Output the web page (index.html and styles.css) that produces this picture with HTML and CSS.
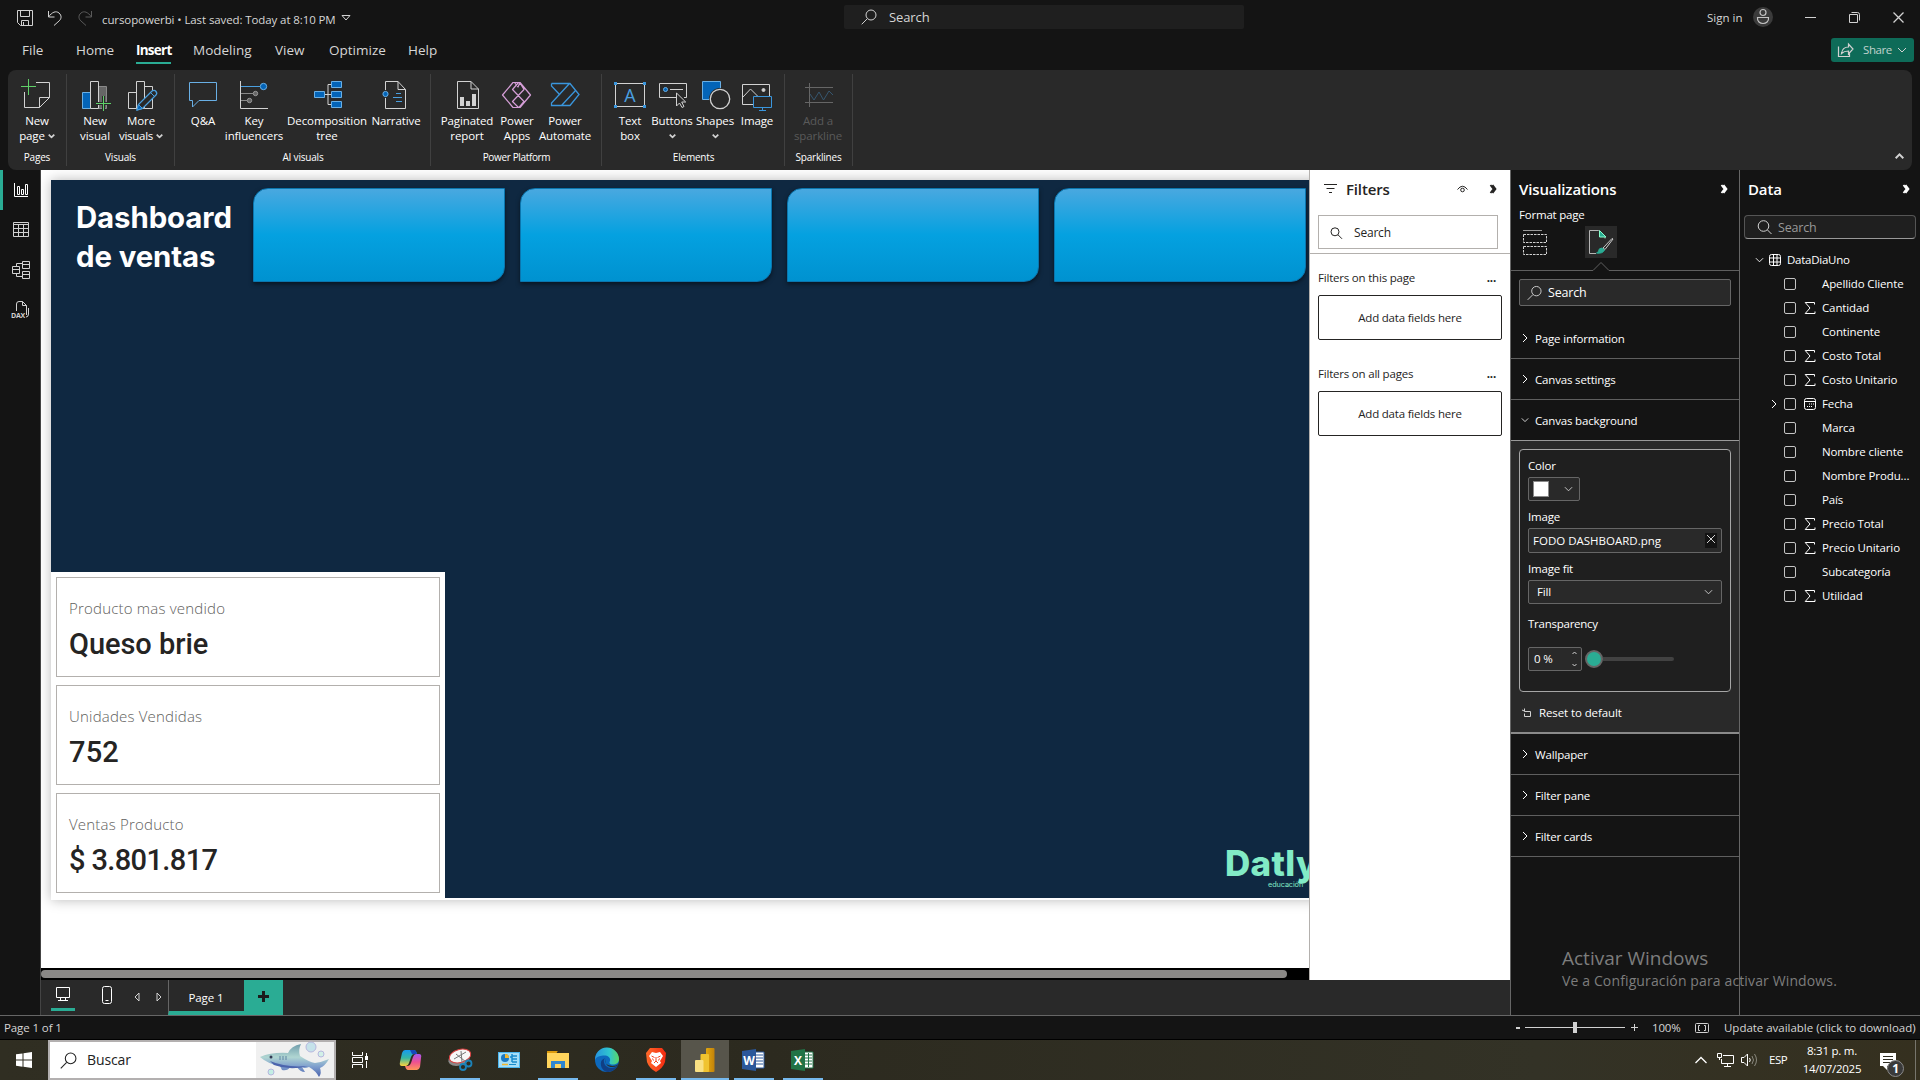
FILE: index.html
```html
<!DOCTYPE html>
<html lang="en">
<head>
<meta charset="utf-8">
<title>cursopowerbi</title>
<link rel="stylesheet" href="styles.css">
</head>
<body>
<svg class="defs" aria-hidden="true">
  <symbol id="chev-r" viewBox="0 0 8 10"><path d="M2 1l4 4-4 4"/></symbol>
  <symbol id="chev-d" viewBox="0 0 10 8"><path d="M1 2l4 4 4-4"/></symbol>
  <symbol id="collapse" viewBox="0 0 8 10"><path d="M1.500 1l3 4-3 4M3.500 1l3 4-3 4" stroke-width="1.800"/></symbol>
  <symbol id="lens" viewBox="0 0 16 16"><circle cx="10" cy="6" r="5"/><path d="M6.3 9.7L.7 15.3"/></symbol>
  <symbol id="sigma" viewBox="0 0 12 12"><path d="M10.5 2.5v-2H1.2L6 6l-4.800 5.500h9.800v-2"/></symbol>
</svg>

<header class="titlebar">
  <svg class="i save" width="16" height="16"><path d="M.5.5h15v15h-12l-3-3zM3.500 .5v6h9v-6M4.500 15.500v-5h7v5M6.500 15v-3"/></svg>
  <svg class="i undo" width="16" height="16"><path d="M1.500 1v6h6M1.500 7C5 2 9 .5 12 3s2.500 6 0 8l-5 4.500"/></svg>
  <svg class="i redo" width="16" height="16"><path d="M14.500 1v6h-6M14.500 7C11 2 7 .5 4 3s-2.500 6 0 8l5 4.500"/></svg>
  <span class="doc">cursopowerbi • Last saved: Today at 8:10 PM</span>
  <svg class="i tri" width="10" height="6"><path d="M1 .5h8L5 5z"/></svg>
  <div class="top-search"><svg class="i" width="16" height="16"><use href="#lens"/></svg><span>Search</span></div>
  <span class="signin">Sign in</span>
  <svg class="avatar" width="20" height="20"><circle cx="10" cy="10" r="10" fill="#3b3b3b"/><g fill="none" stroke="#c4c4c4" stroke-width="1.200"><circle cx="10" cy="5.500" r="3"/><path d="M4.500 10.500h11c.6 4-2.500 6-5.500 6s-6-2-5.500-6z"/></g></svg>
  <svg class="i win min" width="11" height="11"><path d="M0 5.500h11"/></svg>
  <svg class="i win max" width="11" height="11"><path d="M.5 2.500h8v8h-8zM2.500 .5h6q2 0 2 2v6"/></svg>
  <svg class="i win close" width="11" height="11"><path d="M.5.5l10 10M10.500 .5l-10 10" stroke-width="1.300"/></svg>
</header>

<nav class="tabs">
  <span class="tab file">File</span><span class="tab home">Home</span><span class="tab insert"><b>Insert</b></span><span class="tab modeling">Modeling</span><span class="tab view">View</span><span class="tab optimize">Optimize</span><span class="tab">Help</span>
  <button class="share"><svg class="i" width="16" height="14"><path d="M.5 3.500v10h11v-3M10.500 1v3C6 4 4 6.500 3.500 10.500 5.500 8.500 7 8 10.500 8v3L15 6z" stroke-width="1.200"/></svg><span>Share</span><svg class="i" width="10" height="8"><use href="#chev-d"/></svg></button>
</nav>

<section class="ribbon">
  <div class="group g-pages">
    <div class="cmds"><div class="cmd w58"><svg class="i" width="32" height="34"><path d="M15 4.500h13.500v15l-10 10h-15V14M18.500 29.500v-10h10"/><path d="M7.500 1v16M0 8.500h15" stroke="#5fd068"/></svg><span>New</span><span>page <svg class="i bold" width="7" height="6" viewBox="0 0 10 8"><use href="#chev-d"/></svg></span></div></div>
    <div class="gname">Pages</div>
  </div>
  <div class="group g-visuals">
    <div class="cmds"><div class="cmd w46"><svg class="i" width="32" height="34"><path d="M3.500 14.500h8v16h-8z" fill="#0364b8" stroke="#69afe5"/><path d="M19.500 8.500h8v22h-8z" fill="#666" stroke="#8a8a8a"/><path d="M11.500 3.500h8v27h-8z" fill="#292929"/><path d="M24.500 18v15M17 25.500h15" stroke="#292929" stroke-width="3"/><path d="M24.500 18v15M17 25.500h15" stroke="#5fd068"/></svg><span>New</span><span>visual</span></div>
    <div class="cmd w46"><svg class="i" width="32" height="34"><path d="M3.500 14.500h8v16h-8zM19.500 8.500h8v22h-8z"/><path d="M11.500 3.500h8v27h-8z" fill="#292929"/><path d="M12 32l1.500-5.500L27 13q2.500-1.500 4 .5t0 3.500L17.500 30.500z" fill="#292929" stroke="#4ba0e0" stroke-width="1.300"/><path d="M12 32l1.500-5.500 4 4z" fill="#0364b8" stroke="#4ba0e0"/><path d="M26 15l3 3" stroke="#4ba0e0"/></svg><span>More</span><span class="tight">visuals <svg class="i bold" width="7" height="6" viewBox="0 0 10 8"><use href="#chev-d"/></svg></span></div></div>
    <div class="gname">Visuals</div>
  </div>
  <div class="group g-ai">
    <div class="cmds"><div class="cmd w40"><svg class="i" width="32" height="34"><path d="M2.500 4.500h27v18H12l-6.500 6.500v-6.500h-3z" stroke="#69afe5"/></svg><span>Q&amp;A</span></div>
    <div class="cmd w62"><svg class="i" width="32" height="34"><path d="M2.500 3v27.500H30"/><path d="M3 8.500h19" stroke="#4ba0e0"/><path d="M3 15.500h12M3 22.500h6" stroke="#8a8a8a"/><circle cx="25.500" cy="8.500" r="3.200" fill="#0364b8" stroke="#69afe5"/><circle cx="17.500" cy="15.500" r="2.200" fill="#666" stroke="#999"/><circle cx="11.500" cy="22.500" r="2.200" fill="#666" stroke="#999"/></svg><span>Key</span><span>influencers</span></div>
    <div class="cmd w84"><svg class="i" width="32" height="34"><path d="M14 16.500h6M20 6.500h-3v20h3"/><path d="M3.500 13.500h10v6h-10zM20.500 3.500h10v6h-10zM20.500 13.500h10v6h-10zM20.500 23.500h10v6h-10z" fill="#0364b8" stroke="#69afe5"/></svg><span>Decomposition</span><span>tree</span></div>
    <div class="cmd w54"><svg class="i" width="32" height="34"><path d="M5.500 12V3.500H18l7.500 8v19h-20V20M18 3.500v8h7.500"/><path d="M16 15.500h5M13 19.500h9M16 23.500h6" stroke="#4ba0e0"/><circle cx="5.500" cy="16" r="2.600" fill="#0364b8" stroke="#69afe5"/></svg><span>Narrative</span></div></div>
    <div class="gname">AI visuals</div>
  </div>
  <div class="group g-platform">
    <div class="cmds"><div class="cmd w52"><svg class="i" width="32" height="34"><path d="M6.500 3.500H20l7.500 7.500v19.500h-21zM20 3.500V11h7.500"/><path d="M9 19h4v9H9zM15 23h4v5h-4zM21 16h4v12h-4z" fill="#d2d2d2" stroke="none"/></svg><span>Paginated</span><span>report</span></div>
    <div class="cmd w48"><svg class="i" width="32" height="34"><path d="M12 4.500h7L29.500 17 19 29.500h-7L1.500 17zM17.500 4.500l-6 7L23 23.500l-5 6M13.500 4.500L17 9l2-4.500M19 5l4 6.500L11.500 23.500l6 6" stroke="#d59ed7" stroke-width="1.200" stroke-linejoin="round"/></svg><span>Power</span><span>Apps</span></div>
    <div class="cmd w48"><svg class="i" width="32" height="34"><path d="M2.500 5.500H21L30 16.500l-9 11H2.500v-2.500L20.500 5.500M2.500 5.500v2.500l8.500 9M12.500 27.500l14-15" stroke="#3a96dd" stroke-width="1.300"/></svg><span>Power</span><span>Automate</span></div></div>
    <div class="gname">Power Platform</div>
  </div>
  <div class="group g-elements">
    <div class="cmds"><div class="cmd w44"><svg class="i" width="32" height="34"><path d="M1.500 5.500h29v23h-29z"/><path d="M0 4h3v3H0zM29 4h3v3h-3zM0 27h3v3H0zM29 27h3v3h-3z" fill="#3a96dd" stroke="none"/><text x="16" y="24" text-anchor="middle" class="icon-a">A</text></svg><span>Text</span><span>box</span></div>
    <div class="cmd w40"><svg class="i" width="32" height="34"><path d="M20 19.500H3.500v-14h27v14H28M14 11.500h13"/><circle cx="9.500" cy="11.500" r="2" fill="#0364b8" stroke="#69afe5"/><path d="M20.500 15v13l3-3 2.500 4.500 2-1-2.300-4.500h4z" fill="#292929"/></svg><span>Buttons</span><span><svg class="i bold" width="7" height="6" viewBox="0 0 10 8"><use href="#chev-d"/></svg></span></div>
    <div class="cmd w46"><svg class="i" width="32" height="34"><path d="M3.500 3.500h18v18h-18z" fill="#0364b8" stroke="#69afe5"/><circle cx="21" cy="21" r="11" fill="#292929" stroke="none"/><circle cx="21" cy="21" r="9.700" stroke-width="1.300"/></svg><span>Shapes</span><span><svg class="i bold" width="7" height="6" viewBox="0 0 10 8"><use href="#chev-d"/></svg></span></div>
    <div class="cmd w38"><svg class="i" width="32" height="34"><path d="M1.500 6.500h27v20h-27zM2 19l7.500-8 7 7"/><circle cx="22.500" cy="12" r="1.500" fill="#d2d2d2"/><path d="M12.500 18.500h18v11h-18z" fill="#292929" stroke="#3a96dd"/><path d="M21.500 29.500v3M18 32.500h7" stroke="#3a96dd"/></svg><span>Image</span></div></div>
    <div class="gname">Elements</div>
  </div>
  <div class="group g-spark">
    <div class="cmds"><div class="cmd w66 off"><svg class="i" width="32" height="34"><path d="M7.500 5v24M3 9.500h28M3 24.500h28" stroke="#666"/><path d="M8 16l4 6 5-8 4.500 8L27 13l4 4" stroke="#36566f"/></svg><span>Add a</span><span>sparkline</span></div></div>
    <div class="gname">Sparklines</div>
  </div>
  <svg class="i ribbon-up" width="9" height="6"><path d="M.7 5.200l3.800-3.800 3.800 3.800" stroke-width="2"/></svg>
</section>

<main class="work">
  <aside class="rail">
    <div class="rail-item on"><svg class="i" width="18" height="18"><path d="M2.500 2v13.500H16M5.500 5.500h2v8h-2zM9.500 8.500h2v5h-2zM13.500 3.500h2v10h-2z"/></svg></div>
    <div class="rail-item"><svg class="i" width="18" height="18"><path d="M1.500 1.500h15v14h-15zM1.500 3.500h15M1.500 7.500h15M1.500 11.500h15M6.500 4v11.500M11.500 4v11.500"/></svg></div>
    <div class="rail-item"><svg class="i" width="18" height="18"><path d="M.5 5.500h7v7h-7zM.5 8.500h7M10.500 .5h7v7h-7zM10.500 3.500h7M10.500 10.500h7v7h-7zM10.500 13.500h7M4.500 5V2.500h6M4.500 13v2.500h6"/></svg></div>
    <div class="rail-item"><svg class="i" width="20" height="18"><path d="M4.500 10V3q0-2.500 2.500-2.500h3.500l4 4V14M10.500 .5v4h4M16.500 7v6q0 3-2.500 3"/><text x="-1" y="17" class="dax">DAX</text></svg></div>
  </aside>

  <div class="center">
    <div class="stage">
      <div class="canvas-col">
        <div class="viewport">
          <div class="report">
            <div class="backdrop">
              <div class="heading">Dashboard<br>de ventas</div>
              <div class="tile"></div><div class="tile"></div><div class="tile"></div><div class="tile"></div>
            </div>
            <div class="brand"><div class="brand-name">Datly</div><div class="brand-sub">educación</div></div>
            <div class="multicard">
              <div class="card"><div class="label">Producto mas vendido</div><div class="value v1">Queso brie</div></div>
              <div class="card"><div class="label">Unidades Vendidas</div><div class="value v2">752</div></div>
              <div class="card"><div class="label">Ventas Producto</div><div class="value v3">$ 3.801.817</div></div>
            </div>
          </div>
        </div>
        <div class="hscroll"><div class="thumb"></div></div>
      </div>
      <aside class="filters">
        <div class="f-head"><svg class="i" width="13" height="12"><path d="M0 1.500h13M2.500 5.500h8M5 9.500h3"/></svg><h2>Filters</h2><svg class="i eye" width="11" height="8"><path d="M.5 4.500Q5.500-2 10.500 4.500"/><circle cx="5.500" cy="5" r="1.800"/></svg><svg class="i" width="8" height="10"><use href="#collapse"/></svg></div>
        <div class="f-search"><svg class="i" width="12" height="12"><circle cx="5" cy="4.800" r="4"/><path d="M8 7.800l4 4"/></svg><span>Search</span></div>
        <div class="f-rule"></div>
        <div class="f-title first"><span>Filters on this page</span><b>...</b></div>
        <div class="f-drop">Add data fields here</div>
        <div class="f-title"><span>Filters on all pages</span><b>...</b></div>
        <div class="f-drop">Add data fields here</div>
      </aside>
    </div>
    <div class="pagebar">
      <div class="pb desk"><svg class="i" width="16" height="16"><path d="M1.500 1.500h13v10h-13zM5.500 12v2M10.500 12v2M3 14.500h10"/></svg></div>
      <div class="pb phone"><svg class="i" width="10" height="18"><rect x=".5" y=".5" width="9" height="17" rx="2"/><path d="M3.500 14.500h3"/></svg></div>
      <svg class="i arrow a1" width="6" height="10"><path d="M5 1v8L1 5z"/></svg>
      <svg class="i arrow a2" width="6" height="10"><path d="M1 1v8l4-4z"/></svg>
      <div class="page-tab">Page 1</div>
      <div class="add"><svg width="11" height="11"><path d="M5.500 0v11M0 5.500h11" stroke="#1c1c1c" stroke-width="3"/></svg></div>
    </div>
  </div>

  <aside class="viz">
    <div class="p-head"><h2 class="viz-title">Visualizations</h2><svg class="i" width="8" height="10"><use href="#collapse"/></svg></div>
    <div class="fmt">Format page</div>
    <div class="modes">
      <svg class="i build" width="26" height="26"><path d="M0 .5h19" stroke="#9a9a9a"/><path d="M.5 4.500h23v8H.5zM.5 16.500h23v8H.5z" stroke-dasharray="2.500 1"/></svg>
      <div class="mode-on"><svg class="i" width="26" height="26"><path d="M8 24.500H1.500v-23h9l6.500 6v2" stroke="#b5b5b5"/><path d="M11.500 1.500v6.500h6.500z" fill="#2aac94" stroke="#8fc"/><path d="M24 9.500l-9 9.500 2 1.500 8-10.500z" stroke="#ccc"/><path d="M14 19q-3.500 0-3.500 3.500l-2 1.500q6 1 8-3z" fill="#2aac94" stroke="#2aac94"/></svg></div>
    </div>
    <svg class="i notch" width="228" height="9"><path d="M0 8.500h82l8-8 8 8h130" stroke="#5f5f5f"/></svg>
    <div class="v-search"><svg class="i" width="15" height="16" viewBox="0 0 16 16"><use href="#lens"/></svg><span>Search</span></div>
    <div class="acc top"><svg class="i" width="8" height="10"><use href="#chev-r"/></svg><span>Page information</span></div>
    <div class="acc"><svg class="i" width="8" height="10"><use href="#chev-r"/></svg><span>Canvas settings</span></div>
    <div class="acc open"><svg class="i" width="9" height="8" viewBox="0 0 10 8"><use href="#chev-d"/></svg><span>Canvas background</span></div>
    <div class="acc-body">
      <div class="props">
        <div class="p-label">Color</div>
        <div class="field color"><i class="swatch"></i><svg class="i" width="9" height="8" viewBox="0 0 10 8"><use href="#chev-d"/></svg></div>
        <div class="p-label">Image</div>
        <div class="field image"><span>FODO DASHBOARD.png</span><i class="x"><svg class="i" width="8" height="8"><path d="M0 0l8 8M8 0L0 8"/></svg></i></div>
        <div class="p-label">Image fit</div>
        <div class="field fit"><span>Fill</span><svg class="i" width="9" height="8" viewBox="0 0 10 8"><use href="#chev-d"/></svg></div>
        <div class="p-label tr">Transparency</div>
        <div class="slide-row"><div class="field num"><span>0 %</span><svg class="i" width="5" height="16"><path d="M.5 3L2.500 1l2 2M.5 13l2 2 2-2"/></svg></div><div class="slider"><i class="knob"></i><i class="track"></i></div></div>
      </div>
      <div class="reset"><svg class="i" width="10" height="10"><path d="M3 3.500h5.500v5h-6v-3M2.500 .5v3M0 2l3.500 1.500"/></svg><span>Reset to default</span></div>
    </div>
    <div class="acc"><svg class="i" width="8" height="10"><use href="#chev-r"/></svg><span>Wallpaper</span></div>
    <div class="acc"><svg class="i" width="8" height="10"><use href="#chev-r"/></svg><span>Filter pane</span></div>
    <div class="acc"><svg class="i" width="8" height="10"><use href="#chev-r"/></svg><span>Filter cards</span></div>
  </aside>

  <aside class="data">
    <div class="p-head"><h2>Data</h2><svg class="i" width="8" height="10"><use href="#collapse"/></svg></div>
    <div class="d-search"><svg class="i" width="15" height="15"><circle cx="6.500" cy="6" r="5.300"/><path d="M10.500 10l4 4"/></svg><span>Search</span></div>
    <div class="row table"><svg class="i" width="9" height="8" viewBox="0 0 10 8"><use href="#chev-d"/></svg><svg class="i tbl" width="12" height="12"><rect x=".5" y=".5" width="11" height="11" rx="2"/><path d="M4.500 .5v11M8 .5v11M.5 4h11M.5 8h11"/></svg><span>DataDiaUno</span></div>
    <div class="row"><i class="exp"></i><i class="box"></i><i class="kind"></i><span>Apellido Cliente</span></div>
    <div class="row"><i class="exp"></i><i class="box"></i><i class="kind"><svg class="i" width="12" height="12"><use href="#sigma"/></svg></i><span>Cantidad</span></div>
    <div class="row"><i class="exp"></i><i class="box"></i><i class="kind"></i><span>Continente</span></div>
    <div class="row"><i class="exp"></i><i class="box"></i><i class="kind"><svg class="i" width="12" height="12"><use href="#sigma"/></svg></i><span>Costo Total</span></div>
    <div class="row"><i class="exp"></i><i class="box"></i><i class="kind"><svg class="i" width="12" height="12"><use href="#sigma"/></svg></i><span>Costo Unitario</span></div>
    <div class="row"><i class="exp"><svg class="i" width="8" height="10"><use href="#chev-r"/></svg></i><i class="box"></i><i class="kind"><svg class="i" width="12" height="12"><rect x=".5" y=".5" width="11" height="11" rx="2"/><path d="M.5 3.500h11M5 6h1M7 6h1M9 6h1M3 8.500h1M5 8.500h1M7 8.500h1"/></svg></i><span>Fecha</span></div>
    <div class="row"><i class="exp"></i><i class="box"></i><i class="kind"></i><span>Marca</span></div>
    <div class="row"><i class="exp"></i><i class="box"></i><i class="kind"></i><span>Nombre cliente</span></div>
    <div class="row"><i class="exp"></i><i class="box"></i><i class="kind"></i><span>Nombre Produ...</span></div>
    <div class="row"><i class="exp"></i><i class="box"></i><i class="kind"></i><span>País</span></div>
    <div class="row"><i class="exp"></i><i class="box"></i><i class="kind"><svg class="i" width="12" height="12"><use href="#sigma"/></svg></i><span>Precio Total</span></div>
    <div class="row"><i class="exp"></i><i class="box"></i><i class="kind"><svg class="i" width="12" height="12"><use href="#sigma"/></svg></i><span>Precio Unitario</span></div>
    <div class="row"><i class="exp"></i><i class="box"></i><i class="kind"></i><span>Subcategoría</span></div>
    <div class="row"><i class="exp"></i><i class="box"></i><i class="kind"><svg class="i" width="12" height="12"><use href="#sigma"/></svg></i><span>Utilidad</span></div>
  </aside>
  <div class="watermark"><div class="wm1">Activar Windows</div><div class="wm2">Ve a Configuración para activar Windows.</div></div>
</main>

<footer class="status">
  <span class="pg">Page 1 of 1</span>
  <div class="zoomer"><svg class="i" width="124" height="12"><path d="M0 6h4" stroke-width="2"/><path d="M9 5.500h100M115 5.500h7M118.500 2v7"/><path d="M57 0h4v11h-4z" fill="#d2d2d2" stroke="none"/></svg></div>
  <span class="pct">100%</span>
  <svg class="i fitpage" width="14" height="10"><rect x=".5" y=".5" width="13" height="9" rx="1"/><path d="M5 2.500H3.500v5H5M9 2.500h1.500v5H9"/></svg>
  <span class="upd">Update available (click to download)</span>
</footer>

<div class="taskbar">
  <div class="start"><svg width="16" height="16" fill="#fff"><path d="M0 2.300L6.500 1.400V7.500H0zM7.500 1.200L16 0v7.500H7.500zM0 8.500h6.500v6.200L0 13.700zM7.500 8.500H16V16l-8.500-1.200z"/></svg></div>
  <div class="tb-search"><svg class="i" width="17" height="17" viewBox="0 0 16 16"><use href="#lens"/></svg><span>Buscar</span>
    <div class="shark"><svg width="74" height="36" viewBox="0 0 74 36"><defs><linearGradient id="sk" x1="0" y1="0" x2="0" y2="1"><stop offset="0" stop-color="#6f9cab"/><stop offset=".4" stop-color="#b0d6d2"/><stop offset=".68" stop-color="#7f9fce"/><stop offset="1" stop-color="#4a62ac"/></linearGradient></defs>
      <path d="M4 15Q16 10 32 11Q35 4 45 2Q42 8 44 14Q53 20 59 21Q66 20 73 17Q69 24 64 26Q66 31 63 35Q60 29 53 25Q48 27 46 25L49 30Q44 30 41 25L34 25Q32 29 26 28L24 24Q12 22 4 15z" fill="url(#sk)"/><path d="M14 19Q30 26 52 24Q34 29 18 23z" fill="#4c64ad"/><circle cx="15" cy="15" r="1.500" fill="#333b55"/><path d="M24 14v4M27 14v4M30 14v4" stroke="#6184a5"/><circle cx="55" cy="5" r="5" fill="#c5e2ea" stroke="#b6b7de"/><circle cx="65" cy="12" r="3" fill="#d2f0e7" stroke="#b6b7de"/><circle cx="15" cy="30" r="3" fill="#c3eee4" stroke="#b6b7de"/></svg></div>
  </div>
  <div class="apps">
    <div class="app task"><svg class="i" width="16" height="16"><path d="M.5 0v3.500h10V0M.5 16v-3.500h10V16M.5 5.500h10v5H.5zM14.500 1v3M14.500 9v7" stroke="#fff"/><path d="M13 4h3v4h-3z" fill="#fff" stroke="none"/></svg></div>
    <div class="app"><svg width="24" height="22"><defs><linearGradient id="cp1" x1="0" y1="0" x2="0" y2="1"><stop offset="0" stop-color="#169af0"/><stop offset=".5" stop-color="#35b7a4"/><stop offset="1" stop-color="#ffd33b"/></linearGradient><linearGradient id="cp2" x1="0" y1="0" x2="0" y2="1"><stop offset="0" stop-color="#a557ee"/><stop offset=".5" stop-color="#ee5091"/><stop offset="1" stop-color="#ff9658"/></linearGradient></defs><path d="M6 1h9q2 0 3 4h-3q-2 0-3 3l-2 6q-1 3-3 3H3q-3 0-2-4L3 4q1-3 3-3z" fill="url(#cp1)"/><path d="M15 1q2 0 3 4h-5l-2-4z" fill="#1648ba"/><path d="M18 21H9q-2 0-3-4h3q2 0 3-3l2-6q1-3 3-3h3q3 0 2 4l-1 9q-1 3-3 3z" fill="url(#cp2)"/></svg></div>
    <div class="app run"><svg width="26" height="24"><ellipse cx="12" cy="11" rx="11" ry="6.500" fill="#888" transform="rotate(-15 12 11)"/><ellipse cx="13" cy="8" rx="11" ry="6.500" fill="#f7f7f7" stroke="#d84242" transform="rotate(-15 13 8)"/><path d="M7 11l12-7M14 3l1 11M9 6l10 8" stroke="#777"/><circle cx="16" cy="19" r="3" fill="none" stroke="#1c82b8" stroke-width="1.800"/><circle cx="21.500" cy="15.500" r="3" fill="none" stroke="#1c82b8" stroke-width="1.800"/></svg></div>
    <div class="app"><svg width="22" height="18"><path d="M0 1h22v16H0z" fill="#4bb5ee"/><path d="M1 2h20v14H1z" fill="#a5def8"/><circle cx="7" cy="7" r="4" fill="#1b79c2"/><path d="M7 7V3a4 4 0 0 1 4 4z" fill="#f3b62d"/><path d="M14 3v8M12 6h2M14 5h5M14 8h5M14 11h5" stroke="#188bcb" stroke-width="1.500"/><path d="M4 13.500h6" stroke="#f3b62d" stroke-width="1.500"/><path d="M11 13.500h7" stroke="#188bcb"/></svg></div>
    <div class="app run"><svg width="22" height="20"><path d="M0 1h9l1 2H0z" fill="#d69100"/><path d="M0 3h22v15H0z" fill="#ffd45c"/><path d="M0 3h9l2-2H1z" fill="#dc9b0e"/><path d="M4 11h14v7h-4v-4H8v4H4z" fill="#2f86d0"/></svg></div>
    <div class="app"><svg width="24" height="24"><defs><linearGradient id="eg" x1="0" y1="0" x2="1" y2="0"><stop offset="0" stop-color="#2693df"/><stop offset=".6" stop-color="#2fc6cf"/><stop offset="1" stop-color="#5bd763"/></linearGradient></defs><circle cx="12" cy="12" r="12" fill="#0d69bd"/><path d="M0 12a12 12 0 0 1 24-1c0 4-3 5.500-6 5.500-4 0-4-2-3-3.500 1-4-3-6-7-5.500S1 9 0 12z" fill="url(#eg)"/><path d="M10 10c-3 3 0 10 6 10 3 0 5-1 7-3-2 5-7 7-11 7-5-1-8-8-5-12z" fill="#103f85"/><path d="M10.500 10.500q-2 7 7 7.500 4 0 6-2l-1 1.500q-3 2-7 1.500-6-1-5-8.500z" fill="#2e2c21"/></svg></div>
    <div class="app run"><svg width="20" height="24"><defs><linearGradient id="br"><stop offset="0" stop-color="#ff6a2a"/><stop offset="1" stop-color="#f42a10"/></linearGradient></defs><path d="M4 0h12l4 5-1 9q-2 6-9 10-7-4-9-10L0 5z" fill="url(#br)"/><path d="M6 4l4 1 4-1 3 4-3 5 1 2-5 4-5-4 1-2-3-5z" fill="#fff"/><path d="M5.500 8l3 1.500M14.500 8l-3 1.500M10 9v4l-2 2M10 13l2 2M7.500 12.500l-1-2M12.500 12.500l1-2" stroke="#f4441e" fill="none"/></svg></div>
    <div class="app run active"><svg width="20" height="24"><defs><linearGradient id="pb1"><stop offset="0" stop-color="#e3a80f"/><stop offset="1" stop-color="#c28209"/></linearGradient></defs><rect x="11" width="8.500" height="24" rx="1" fill="url(#pb1)"/><rect x="5.500" y="6" width="8.500" height="18" rx="1" fill="#f0c330"/><rect y="12" width="8.500" height="12" rx="1" fill="#f9e083"/></svg></div>
    <div class="app run"><svg width="24" height="22"><path d="M12 3h10v16H12z" fill="#fff" stroke="#2b579a"/><path d="M14 6h7M14 9h7M14 12h7M14 15h7" stroke="#2b579a"/><path d="M0 2l14-2v22L0 20z" fill="#2b579a"/><text x="7" y="15.500" text-anchor="middle" class="app-letter">W</text></svg></div>
    <div class="app run"><svg width="24" height="22"><path d="M12 3h10v16H12z" fill="#fff" stroke="#217346"/><path d="M14 6h7M14 9h7M14 12h7M14 15h7M17.500 4v14" stroke="#217346"/><path d="M0 2l14-2v22L0 20z" fill="#217346"/><text x="7" y="15.500" text-anchor="middle" class="app-letter">X</text></svg></div>
  </div>
  <div class="tray">
    <svg class="i" width="14" height="8"><path d="M1.500 7L7 1.500 12.500 7" stroke="#fff" stroke-width="1.300"/></svg>
    <svg class="i net" width="17" height="14"><path d="M6 2.500h10.500v8H4.500V6M10.500 10.500v3M7 13.500h7M.5 .5h4v4h-4zM2.500 4v3" stroke="#fff"/></svg>
    <svg class="i vol" width="17" height="14"><path d="M.5 4.500h2.500L6.500 1v12L3 9.500H.5zM8.500 5q1.500 2 0 4" stroke="#fff"/><path d="M11 3q3 4 0 8M13.500 1q4 6 0 12" stroke="#8a897f"/></svg>
    <span class="lang">ESP</span>
    <div class="clock"><span>8:31 p. m.</span><span>14/07/2025</span></div>
    <svg class="bell" width="26" height="26"><path d="M1 1h16v13H8v4l-4-4H1z" fill="#fff"/><path d="M4 4.500h10M4 7.500h10M4 10.500h8" stroke="#2e2c21"/><circle cx="16.500" cy="16.500" r="8" fill="#3a3a3a" stroke="#8b8b8b"/><text x="16.500" y="21" text-anchor="middle" class="badge">1</text></svg>
    <i class="peek"></i>
  </div>
</div>
</body>
</html>
```
FILE: styles.css
```css
* { box-sizing: border-box; }
body { margin: 0; width: 1920px; height: 1080px; overflow: hidden; display: flex; flex-direction: column; background: #141414; color: #fff; font: 11.5px/16px "Open Sans", "Noto Sans", sans-serif; letter-spacing: -0.2px; }
h2 { margin: 0; font-size: 15px; line-height: 20px; font-weight: 600; letter-spacing: -0.15px; }
i { font-style: normal; display: block; flex: none; }
svg { display: block; flex: none; overflow: visible; }
.defs { position: absolute; width: 0; height: 0; }
.i { fill: none; stroke: #d2d2d2; }
span { white-space: nowrap; }

.titlebar { height: 36px; flex: none; display: flex; align-items: flex-start; color: #d6d6d6; }
.save { margin: 10px 0 0 17px; }
.undo { margin: 10px 0 0 14px; }
.redo { margin: 10px 0 0 14px; stroke: #5a5a5a; }
.doc { margin: 12px 0 0 9px; width: 235px; letter-spacing: -0.1px; }
.tri { margin: 15px 0 0 4px; }
.top-search { margin: 5px 0 0 493px; width: 400px; height: 24px; background: #1f1f1f; border-radius: 2px; display: flex; align-items: center; padding-left: 17px; gap: 12px; font-size: 13px; letter-spacing: -0.1px; }
.signin { margin: 10px 0 0 463px; width: 36px; letter-spacing: 0; }
.avatar { margin: 7px 0 0 10px; }
.win { margin-top: 12px; }
.min { margin-left: 32px; }
.max { margin-left: 33px; }
.close { margin-left: 33px; }

.tabs { height: 34px; flex: none; display: flex; padding-left: 22px; font-size: 13.5px; line-height: 20px; color: #d6d6d6; letter-spacing: 0; }
.tab { padding-top: 4px; }
.file { width: 54px; } .home { width: 60px; } .insert { width: 57px; } .modeling { width: 82px; } .view { width: 54px; } .optimize { width: 79px; }
.insert b { display: block; width: 35px; height: 24px; border-bottom: 2px solid #2aac94; color: #fff; letter-spacing: -0.75px; }
.share { margin: 2px 6px 0 auto; width: 83px; height: 24px; border: 0; border-radius: 3px; background: #0e6b58; color: #c0d2ce; display: flex; align-items: center; padding: 0 8px 0 7px; font: inherit; font-size: 11.5px; letter-spacing: -0.4px; gap: 5px; }
.share span { margin-left: 4px; flex: 1; text-align: left; }

.ribbon { height: 100px; flex: none; margin: 0 8px; background: #292929; border-radius: 8px; display: flex; position: relative; z-index: 2; padding-top: 4px; }
.group { height: 92px; border-right: 1px solid #404040; display: flex; flex-direction: column; justify-content: space-between; }
.g-pages { width: 59px; } .g-visuals { width: 108px; padding-left: 5px; } .g-ai { width: 256px; padding-left: 8px; } .g-platform { width: 171px; padding-left: 10px; } .g-elements { width: 183px; padding-left: 6px; } .g-spark { width: 68px; }
.cmds { display: flex; padding-top: 4px; }
.cmd { display: flex; flex-direction: column; align-items: center; line-height: 15px; letter-spacing: -0.1px; flex: none; }
.cmd > svg { margin-bottom: 1px; }
.cmd span { display: flex; align-items: center; gap: 3px; min-height: 15px; }
.cmd .tight { letter-spacing: -0.3px; }
.w38 { width: 38px; } .w40 { width: 40px; } .w44 { width: 44px; } .w46 { width: 46px; } .w48 { width: 48px; } .w52 { width: 52px; } .w54 { width: 54px; } .w58 { width: 58px; } .w62 { width: 62px; } .w66 { width: 66px; } .w84 { width: 84px; }
.bold { stroke-width: 2.4; }
.off { color: #5a5a5a; }
.gname { text-align: center; font-size: 10px; line-height: 16px; letter-spacing: -0.2px; transform: translateY(-1px); }
.g-visuals .gname, .g-elements .gname { margin-right: 5px; }
.g-ai .gname { margin-right: 7px; }
.g-platform .gname { margin-right: 9px; letter-spacing: -0.35px; }
.icon-a { font: 18px "Open Sans", sans-serif; fill: #4ba0e0; stroke: none; }
.ribbon-up { margin: 79px 8px 0 auto; }

.work { height: 846px; flex: none; display: flex; position: relative; border-bottom: 1px solid #666; }
.rail { width: 41px; flex: none; border-right: 1px solid #444; }
.rail-item { height: 40px; padding: 11px 0 0 12px; }
.rail-item.on { border-left: 3px solid #2aac94; padding-left: 9px; }
.rail-item.on .i { stroke: #fff; }
.dax { font: bold 7px "Open Sans", sans-serif; fill: #d2d2d2; stroke: none; }
.center { width: 1469px; flex: none; display: flex; flex-direction: column; }
.stage { height: 810px; display: flex; }
.canvas-col { width: 1268px; flex: none; background: #000; }
.viewport { height: 798px; background: #fff; overflow: hidden; padding: 10px 0 0 10px; }
.report { width: 1280px; height: 720px; background: #fff; box-shadow: 0 0 12px rgba(0,0,0,.28); position: relative; }
.backdrop { height: 718px; background: #0f2841; display: flex; padding: 8px 0 0 25px; gap: 15px; }
.heading { width: 162px; flex: none; font: 700 29.4px/38.700px Inter, sans-serif; letter-spacing: -0.1px; padding-top: 11px; white-space: nowrap; }
.tile { width: 252px; height: 94px; flex: none; border-radius: 15px 0 15px 0; background: linear-gradient(#49a8e0, #04a1e0 50%, #0092d0); border: 1px solid #0b76ae; box-shadow: 0 2px 4px rgba(0,0,0,.5); }
.brand { position: absolute; left: 1174px; top: 663px; color: #82ebc6; font-family: Inter, sans-serif; }
.brand-name { font-size: 35px; line-height: 40px; font-weight: 800; letter-spacing: 0.3px; }
.brand-sub { font-size: 7.300px; line-height: 8px; margin: -2px 0 0 43px; letter-spacing: -0.1px; }
.multicard { position: absolute; left: 0; top: 392px; width: 394px; height: 328px; background: #fff; padding: 5px; display: flex; flex-direction: column; gap: 8px; }
.card { height: 100px; border: 1px solid #b3b0ad; padding: 19px 0 0 12px; }
.label { color: #605e5c; font: 300 15px/22px "Open Sans", sans-serif; letter-spacing: 0.2px; }
.value { color: #252423; font: 500 29px/38px Roboto, sans-serif; margin-top: 6px; }
.v1 { letter-spacing: -0.05px; }
.v2 { letter-spacing: 0.2px; }
.v3 { letter-spacing: -0.62px; }
.hscroll { height: 12px; padding-top: 2px; }
.thumb { width: 1246px; height: 8px; border-radius: 4px; background: #8a8886; }

.filters { width: 201px; flex: none; border-left: 1px solid #b3b0ad; background: #fff; color: #252423; }
.filters .i { stroke: #252423; }
.f-head { height: 45px; display: flex; align-items: center; padding: 0 13px 7px 14px; }
.f-head h2 { margin-left: 9px; flex: 1; }
.eye { margin-right: 21px; }
.f-search { margin-left: 8px; width: 180px; height: 34px; border: 1px solid #b3b0ad; display: flex; align-items: center; gap: 12px; padding: 1px 0 0 11px; font-size: 12px; }
.f-rule { height: 5px; border-bottom: 1px solid #b3b0ad; }
.f-title { height: 51px; padding: 26px 14px 0 8px; display: flex; justify-content: space-between; font-size: 11.5px; }
.f-title.first { height: 41px; padding-top: 16px; }
.f-drop { margin-left: 8px; width: 184px; height: 45px; border: 1px solid #252423; border-radius: 2px; text-align: center; line-height: 43px; }

.pagebar { height: 35px; background: #292929; display: flex; }
.pb { padding-top: 6px; }
.desk { width: 24px; margin-left: 10px; padding-left: 4px; border-bottom: 3px solid #2aac94; height: 31px; }
.desk .i, .phone .i { stroke: #fff; }
.phone { margin-left: 27px; }
.arrow { margin-top: 12px; }
.a1 { margin-left: 22px; } .a2 { margin-left: 16px; }
.page-tab { margin-left: 6px; width: 76px; border-left: 1px solid #666; border-bottom: 4px solid #2aac94; text-align: center; line-height: 36px; letter-spacing: -0.1px; padding-right: 1px; }
.add { width: 39px; background: #2aac94; display: flex; align-items: center; justify-content: center; padding-bottom: 2px; }

.viz { width: 229px; flex: none; border-left: 1px solid #666; }
.p-head { height: 37px; display: flex; justify-content: space-between; align-items: center; padding: 1px 11px 0 8px; }
.p-head .i { stroke: #fff; }
.fmt { padding-left: 8px; }
.modes { height: 40px; padding: 3px 0 0 12px; display: flex; }
.build { margin-top: 4px; }
.mode-on { margin-left: 36px; width: 32px; height: 32px; background: #292929; padding: 3px; }
.notch { margin-top: -1px; }
.v-search { margin: 8px 0 12px 8px; width: 212px; height: 27px; border: 1px solid #666; background: #292929; border-radius: 2px; display: flex; align-items: center; padding: 1px 0 0 7px; gap: 6px; font-size: 12.5px; }
.acc { height: 41px; display: flex; align-items: center; padding: 2px 0 0 10px; gap: 6px; border-bottom: 1px solid #5f5f5f; letter-spacing: -0.17px; }
.acc .i { stroke: #fff; margin-top: -3px; width: 8px; }
.acc.open { border-color: #999; }
.acc-body { height: 293px; background: #292929; border-bottom: 2px solid #8a8a8a; padding: 8px 8px 0 8px; }
.props { height: 243px; border: 1px solid #a6a6a6; border-radius: 4px; background: #1f1f1f; padding: 8px 8px 0; }
.p-label { line-height: 16px; margin-bottom: 3px; }
.field { border: 1px solid #666; border-radius: 2px; background: #292929; display: flex; align-items: center; justify-content: space-between; }
.color { width: 52px; height: 24px; margin-bottom: 8px; padding: 0 6px 0 4px; }
.swatch { width: 16px; height: 16px; background: #fff; border: 1px solid #8a8a8a; }
.image { height: 25px; margin-bottom: 8px; padding: 0 4px; letter-spacing: 0; }
.x { width: 12px; height: 15px; background: #141414; padding: 2px; }
.fit { height: 24px; margin-bottom: 12px; padding: 0 8px; }
.tr { margin-bottom: 15px; letter-spacing: -0.25px; }
.slide-row { display: flex; }
.num { width: 54px; height: 24px; padding: 0 4px 0 5px; }
.slider { display: flex; align-items: center; margin-left: 3px; }
.knob { width: 18px; height: 18px; border-radius: 50%; background: #2aac94; border: 2px solid #666; }
.track { width: 71px; height: 4px; background: #424242; border-radius: 0 2px 2px 0; }
.reset { display: flex; align-items: center; gap: 7px; padding: 13px 0 0 3px; letter-spacing: -0.1px; }

.data { width: 181px; flex: none; border-left: 1px solid #666; }
.data .p-head { padding-right: 10px; }
.d-search { margin: 8px 0 9px 4px; width: 172px; height: 24px; border: 1px solid #555; border-bottom-color: #999; border-radius: 4px; background: #1f1f1f; color: #999; display: flex; align-items: center; padding: 1px 0 0 12px; gap: 6px; font-size: 12.5px; }
.row { height: 24px; display: flex; align-items: center; letter-spacing: -0.12px; }
.table { padding-left: 15px; letter-spacing: -0.25px; }
.tbl { margin: 0 6px 0 5px; }
.exp { width: 44px; padding-left: 30px; }
.box { width: 12px; height: 12px; border: 1px solid #c4c4c4; border-radius: 2px; }
.kind { width: 26px; padding-left: 8px; }
.row .i { stroke: #fff; }
.watermark { position: absolute; left: 1562px; top: 774px; color: #7d7d7d; white-space: nowrap; }
.wm1 { font-size: 19px; line-height: 28px; letter-spacing: 0; }
.wm2 { font-size: 14px; line-height: 18px; letter-spacing: 0.13px; }

.status { height: 24px; flex: none; border-bottom: 1px solid #000; display: flex; align-items: center; color: #d6d6d6; }
.pg { width: 1516px; padding-left: 4px; letter-spacing: -0.1px; }
.pct { margin-left: 12px; width: 29px; }
.fitpage { margin-left: 14px; }
.upd { margin-left: 15px; letter-spacing: -0.02px; }

.taskbar { height: 40px; flex: none; display: flex; background: linear-gradient(90deg, #302e22, #2c2a1f 40%, #333226 80%, #35301f); }
.start { width: 48px; padding: 12px 0 0 16px; }
.tb-search { width: 288px; background: #fff; border: 2px solid #b3b0b0; display: flex; align-items: center; padding-left: 10px; color: #222; font-size: 14px; letter-spacing: -0.1px; }
.tb-search .i { stroke: #222; margin-right: 10px; }
.shark { margin-left: auto; width: 78px; height: 36px; background: #f0f0f0; }
.apps { display: flex; }
.app { width: 40px; margin: 0 4.500px; height: 40px; flex: none; display: flex; align-items: center; justify-content: center; border-bottom: 2px solid transparent; padding-top: 2px; }
.task { margin: 0 6px 0 4px; }
.run { border-color: #76b9ed; }
.active { width: 48px; margin: 0 .5px; background: #57554b; }
.app-letter { font: bold 12px "Open Sans", sans-serif; fill: #fff; }
.tray { margin-left: auto; display: flex; align-items: center; }
.net { margin-left: 9px; }
.vol { margin-left: 7px; }
.lang { margin-left: 11px; width: 20px; letter-spacing: -0.5px; }
.clock { width: 60px; margin-left: 13px; display: flex; flex-direction: column; align-items: center; line-height: 18px; letter-spacing: -0.25px; }
.bell { margin: 10px 0 0 17px; }
.badge { font: bold 12px "Open Sans", sans-serif; fill: #fff; }
.peek { width: 5px; height: 40px; margin-left: 10px; border-left: 1px solid #77756c; }
```
